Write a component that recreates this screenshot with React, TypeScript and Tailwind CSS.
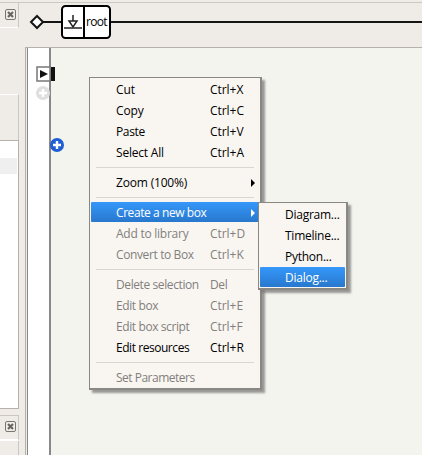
import React from "react";

type Item = { label: string; key?: string; off?: boolean; arrow?: boolean; hot?: boolean; track?: string };

const groups: Item[][] = [
  [
    { label: "Cut", key: "Ctrl+X" },
    { label: "Copy", key: "Ctrl+C" },
    { label: "Paste", key: "Ctrl+V", track: "tracking-[-0.35px]" },
    { label: "Select All", key: "Ctrl+A", track: "tracking-[-0.2px]" },
  ],
  [{ label: "Zoom (100%)", arrow: true, track: "tracking-[-0.18px]" }],
  [
    { label: "Create a new box", arrow: true, hot: true, track: "tracking-[-0.42px]" },
    { label: "Add to library", key: "Ctrl+D", off: true, track: "tracking-[-0.25px]" },
    { label: "Convert to Box", key: "Ctrl+K", off: true, track: "tracking-[-0.38px]" },
  ],
  [
    { label: "Delete selection", key: "Del", off: true, track: "tracking-[-0.4px]" },
    { label: "Edit box", key: "Ctrl+E", off: true, track: "tracking-[-0.4px]" },
    { label: "Edit box script", key: "Ctrl+F", off: true, track: "tracking-[-0.4px]" },
    { label: "Edit resources", key: "Ctrl+R", track: "tracking-[-0.45px]" },
  ],
  [{ label: "Set Parameters", off: true, track: "tracking-[-0.5px]" }],
];

const subItems = ["Diagram...", "Timeline...", "Python...", "Dialog..."];

const hotRow = "rounded-[1px] bg-linear-to-b from-[#3598fa] to-[#2878cd] text-white";

function Close() {
  return (
    <svg className="block size-[11px]" viewBox="0 0 11 11" fill="none">
      <rect x=".5" y=".5" width="10" height="10" rx="1.5" fill="#efebe7" stroke="#77756f" />
      <path d="M3 3L8 8M8 3L3 8" stroke="#66645f" strokeWidth="2.1" />
    </svg>
  );
}

function Plus({ color }: { color: string }) {
  return (
    <svg className="block size-[14px]" viewBox="0 0 14 14">
      <circle cx="7" cy="7" r="7" fill={color} />
      <path d="M7 3V11M3 7H11" stroke="white" strokeWidth="2.4" />
    </svg>
  );
}

function Sidebar() {
  return (
    <aside className="flex h-full w-[19px] shrink-0 flex-col">
      <div className="mt-[2px] flex h-[26px] justify-end border-t border-r border-b border-t-[#cbc7c2] border-r-[#cbc7c2] border-b-white pt-[6px] pr-[2px]"><Close /></div>
      <div className="mt-[66px] h-[46px] border-t border-r border-t-white border-r-[#cbc7c2]" />
      <div className="h-[269px] border-y border-r border-[#b7b1aa] bg-white pt-[17px] pr-px"><div className="h-4 bg-[#efefef]" /></div>
      <div className="mt-[6px] flex h-[26px] justify-end border-t border-r border-b-2 border-t-[#cbc7c2] border-r-[#cbc7c2] border-b-white pt-[5px] pr-[2px]"><Close /></div>
      <div className="flex-1 border-r border-[#cbc7c2]" />
    </aside>
  );
}

function Root() {
  return (
    <div className="relative h-[44px]">
      <svg className="block h-[44px] w-[403px]" viewBox="19 3 403 44">
        <path d="M42 22H422" stroke="#151515" strokeWidth="2" />
        <path d="M37 16L43 22L37 28L31 22Z" fill="white" stroke="#151515" strokeWidth="2" />
        <rect x="62" y="6" width="48" height="32" rx="3.5" fill="white" stroke="black" strokeWidth="2" />
        <path d="M84 6V38" stroke="black" strokeWidth="2" />
        <path d="M73 15V21M69 21H77L73 27Z" fill="none" stroke="#222" strokeWidth="1.5" />
        <path d="M64 28H82" stroke="#222" strokeWidth="1.5" />
      </svg>
      <span className="absolute top-[11px] left-[67px] text-[12px] leading-4 tracking-[-0.7px]">root</span>
    </div>
  );
}

function Menu() {
  return (
    <div className="absolute top-[77px] left-[89px] h-[313px] w-[173px] border border-r-2 border-b-2 border-[#8b8783] bg-[#f9f6f2] px-px pt-px shadow-[3px_3px_2px_#777b]">
      {groups.map((g, i) => (
        <React.Fragment key={i}>
          {i > 0 && <div className="flex h-[9px] items-center px-[5px]"><div className="h-px w-full bg-[#d9d5d0]" /></div>}
          {g.map((it) => (
            <div key={it.label} className={"flex items-center pl-[25px] whitespace-nowrap leading-[20px] " + (it.hot ? "mb-px h-[20px] pt-px " + hotRow : it.off ? "h-[21px] text-[#827f7c]" : "h-[21px] text-black")}>
              <span className={"w-[94px] shrink-0 " + (it.track ?? "tracking-[-0.1px]")}>{it.label}</span>
              {it.key && <span className={it.key === "Del" ? "tracking-[-0.4px]" : "tracking-[-0.05px]"}>{it.key}</span>}
              {it.arrow && <svg className="ml-[41px] h-[8px] w-[4px] shrink-0" viewBox="0 0 4 8" fill="currentColor"><path d="M0 0L4 4L0 8Z" /></svg>}
            </div>
          ))}
        </React.Fragment>
      ))}
    </div>
  );
}

function Submenu() {
  return (
    <div className="absolute top-[202px] left-[258px] h-[88px] w-[90px] border border-r-2 border-b-2 border-[#8b8783] bg-[#f9f6f2] px-px pt-px shadow-[3px_3px_2px_#777b]">
      {subItems.map((s, i) => (
        <div key={s} className={"pl-[25px] whitespace-nowrap tracking-[-0.25px] " + (i === 3 ? "h-[20px] leading-[22px] " + hotRow : "h-[21px] leading-[22px] text-black")}>{s}</div>
      ))}
    </div>
  );
}

export default function App() {
  return (
    <div className="relative flex h-[455px] w-[422px] overflow-hidden bg-[#efebe7] font-['Open_Sans','Noto_Sans',sans-serif] text-[12px]">
      <Sidebar />
      <main className="flex flex-1 flex-col">
        <div className="h-[3px] border-b border-[#cbc7c2]" />
        <Root />
        <div className="ml-[6px] flex flex-1 border-t border-l border-[#b7b1aa]">
          <div className="ml-px w-[24px] border-r-2 border-l border-[#888] bg-white" />
          <div className="flex-1 bg-[#f3f4ee]" />
        </div>
      </main>
      <svg className="absolute top-[66px] left-[36px] h-[16px] w-[19px]" viewBox="0 0 19 16">
        <rect x="1" y="1" width="13" height="14" fill="white" stroke="#777" strokeWidth="1.5" />
        <path d="M4 4L12 8L4 12Z" fill="#111" />
        <path d="M15 1H19V15H15Z" fill="#111" />
      </svg>
      <div className="absolute top-[86px] left-[36px]"><Plus color="#dfdfdf" /></div>
      <div className="absolute top-[138px] left-[50px]"><Plus color="#205fd3" /></div>
      <Menu />
      <Submenu />
    </div>
  );
}
